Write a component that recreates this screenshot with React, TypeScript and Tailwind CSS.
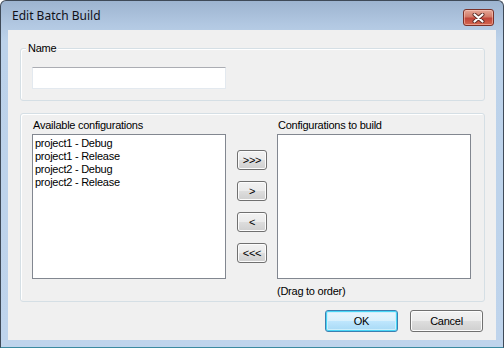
import React from "react";

const sys = { fontFamily: '"Liberation Sans", Arial, sans-serif' };

function SmallBtn({ label }: { label: string }) {
  return (
    <div className="w-[30px] h-[20px] rounded-[3px] border border-[#707070] flex items-center justify-center text-[11px] leading-[13px] text-black bg-[linear-gradient(#f2f2f2_0%,#ebebeb_48%,#dddddd_52%,#cfcfcf_100%)] shadow-[inset_0_0_0_1px_#fcfcfc]">
      {label}
    </div>
  );
}

export default function App() {
  const items = ["project1 - Debug", "project1 - Release", "project2 - Debug", "project2 - Release"];
  return (
    <div
      className="w-[504px] h-[348px] flex flex-col rounded-t-[6px] border border-[#3f4a58] border-b-[#3b8aa0] bg-[linear-gradient(#9db4d0_0px,#b2c8e2_24px,#bcd2ea_40px,#bfd4ec_100%)] overflow-hidden"
      style={sys}
    >
      {/* Title bar */}
      <div className="h-[29px] flex items-center pl-[11px] pr-[9px] shrink-0">
        <span
          className="text-[12px] text-[#101018] flex-1 pt-[1px]"
          style={{ fontFamily: '"Noto Sans", "Open Sans", sans-serif' }}
        >
          Edit Batch Build
        </span>
        <div className="mt-[4px] w-[31px] h-[17px] rounded-[3px] border border-[#7b3128] bg-[linear-gradient(#e6a898_0%,#d27a68_45%,#c0453a_55%,#d4674f_100%)] shadow-[inset_0_0_0_1px_rgba(255,210,200,0.5)] flex items-center justify-center">
          <svg width="13" height="10" viewBox="0 0 13 10">
            <path d="M2.5 1.5 L10.5 8.5 M10.5 1.5 L2.5 8.5" stroke="#5a2a24" strokeWidth="4" strokeLinecap="round" />
            <path d="M2.5 1.5 L10.5 8.5 M10.5 1.5 L2.5 8.5" stroke="#ffffff" strokeWidth="2.2" strokeLinecap="round" />
          </svg>
        </div>
      </div>

      {/* Client area */}
      <div className="mx-[7px] h-[310px] bg-[#f0f0f0] flex flex-col px-[12px] pt-[18px] text-[11px] leading-[13px] tracking-[-0.25px] text-black">
        {/* Name group */}
        <div className="relative w-[465px] h-[53px] rounded-[3px] border border-[#d5dfe5] shadow-[inset_1px_1px_0_#ffffff] pl-[11px] pt-[18px] shrink-0">
          <span className="absolute left-[5px] -top-[7px] bg-[#f0f0f0] px-[2px]">Name</span>
          <div className="w-[194px] h-[22px] bg-white border border-[#e3e9ef] border-t-[#abadb3]" />
        </div>

        {/* Configurations group */}
        <div className="mt-[12px] w-[465px] h-[189px] rounded-[3px] border border-[#d5dfe5] shadow-[inset_1px_1px_0_#ffffff] flex pl-[11px] pt-[5px] shrink-0">
          <div className="flex flex-col">
            <div className="h-[13px] mb-[2px] pl-[1px]">Available configurations</div>
            <div className="w-[194px] h-[145px] bg-white border border-[#828790] px-[2px] pt-[2px]">
              {items.map((t) => (
                <div key={t} className="h-[13px] whitespace-nowrap">
                  {t}
                </div>
              ))}
            </div>
          </div>
          <div className="flex flex-col gap-[11px] ml-[11px] mr-[10px] pt-[31px]">
            <SmallBtn label=">>>" />
            <SmallBtn label=">" />
            <SmallBtn label="<" />
            <SmallBtn label="<<<" />
          </div>
          <div className="flex flex-col">
            <div className="h-[13px] mb-[2px] pl-[1px]">Configurations to build</div>
            <div className="w-[194px] h-[145px] bg-white border border-[#828790]" />
            <div className="h-[13px] mt-[6px]">(Drag to order)</div>
          </div>
        </div>

        {/* Footer */}
        <div className="flex justify-end gap-[12px] pr-[1px] mt-[8px]">
          <div className="w-[73px] h-[22px] rounded-[3px] border border-[#3c7fb1] bg-[linear-gradient(#eaf6fd_0%,#d9f0fc_48%,#bee6fd_52%,#a7d9f5_100%)] shadow-[inset_0_0_0_1px_#48d6f6,inset_0_0_0_2px_#cdeefb] flex items-center justify-center">
            OK
          </div>
          <div className="w-[73px] h-[22px] rounded-[3px] border border-[#707070] bg-[linear-gradient(#f2f2f2_0%,#ebebeb_48%,#dddddd_52%,#cfcfcf_100%)] shadow-[inset_0_0_0_1px_#fcfcfc] flex items-center justify-center">
            Cancel
          </div>
        </div>
      </div>
    </div>
  );
}
